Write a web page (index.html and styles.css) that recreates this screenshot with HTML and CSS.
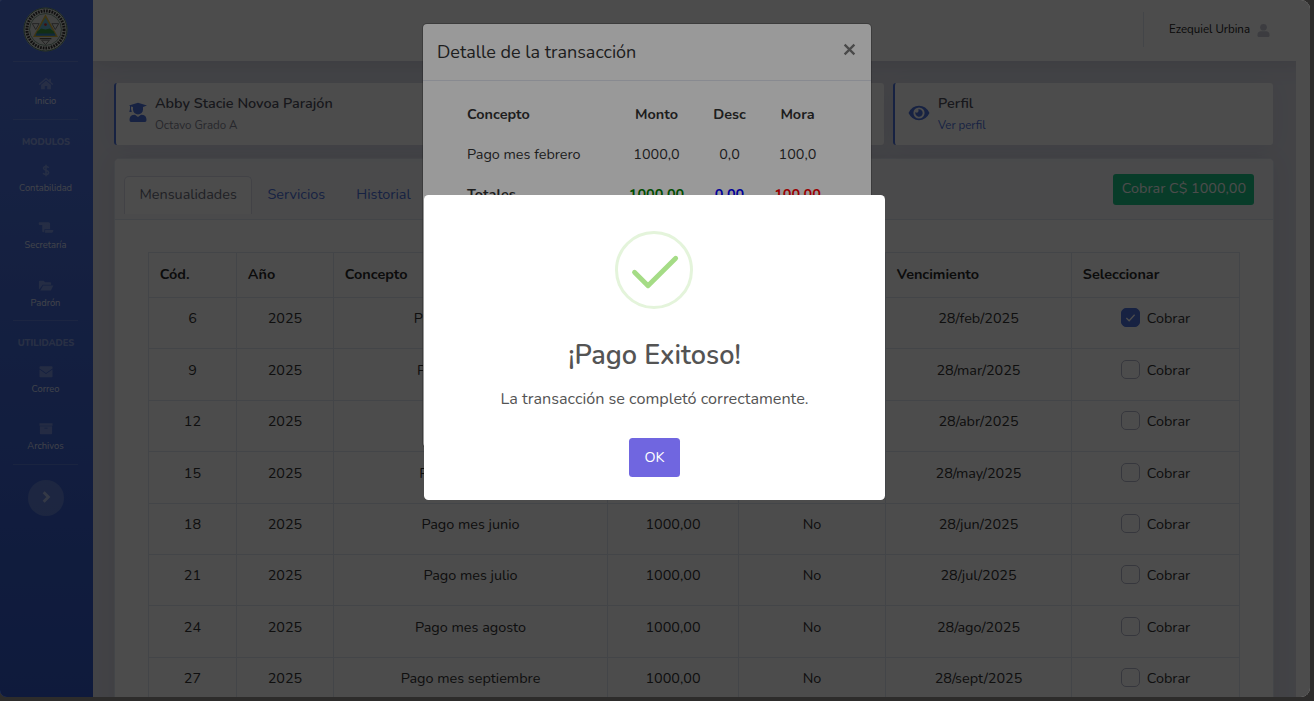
FILE: index.html
```html
<!DOCTYPE html>
<html lang="es">
<head>
<meta charset="utf-8">
<title>Detalle de la transacción</title>
<link rel="stylesheet" href="styles.css">
</head>
<body>
<div class="app">
  <nav class="sidebar">
    <svg class="brand" viewBox="0 0 46 46">
      <circle cx="23" cy="23" r="22.5" fill="#dfe1dc"/>
      <circle cx="23" cy="23" r="22" fill="none" stroke="#4d7a63" stroke-width="1"/>
      <circle cx="23" cy="23" r="19" fill="none" stroke="#333" stroke-width="3" stroke-dasharray="1.700 1.100"/>
      <circle cx="23" cy="23" r="16.300" fill="#dfe1dc" stroke="#4d7a63" stroke-width=".7"/>
      <path d="M9.500 17h7l-3.500 6zM29.500 17h7L33 23zM19 34h8l-4 4.500z" fill="none" stroke="#777" stroke-width="1"/>
      <path d="M17 32.300h12" stroke="#555" stroke-width="1.200"/>
      <path d="M23 9L34.500 30H11.500z" fill="#6bb8d6" stroke="#d8b43a" stroke-width="1.500"/>
      <path d="M14.500 25l4-3 4.500 1 4.500-1 4 3 1 2.500h-19z" fill="#3d9a45"/>
      <path d="M13.500 27h19l1 2.300H12.500z" fill="#3888c4"/>
      <circle cx="23" cy="18" r="1.400" fill="#c33"/>
    </svg>
    <hr class="rule rule-top">
    <a class="item item-home"><svg viewBox="0 0 18 16"><path d="M9 1L0 8.600l1.100 1.200L9 3.200l7.900 6.600L18 8.600 15 6V2h-2v2.400zM9 4.500L3 9.500V15h4.500v-4h3v4H15V9.500z"/></svg><span>Inicio</span></a>
    <hr class="rule">
    <h6 class="group">MODULOS</h6>
    <a class="item"><svg viewBox="0 0 18 16"><path d="M12.200 4.700C11.600 3.500 10.600 3 9 3 7.200 3 6 3.800 6 5.200 6 8.400 12.200 7 12.200 10.500 12.200 12 11 13 9 13 7.200 13 6 12.300 5.500 11M9 .8V15.200" fill="none" stroke="currentColor" stroke-width="1.900"/></svg><span>Contabilidad</span></a>
    <a class="item"><svg viewBox="0 0 18 16"><path d="M1 1.500h11q2 0 2 2V10H7v2.500a1.300 1.300 0 0 1-2.600 0V5H1.500Q0 5 0 3.300 0 1.500 1 1.500zM8 11h10q0 3.500-3 3.500H7.500Q8 13.500 8 11z"/></svg><span>Secretaría</span></a>
    <a class="item"><svg viewBox="0 0 18 16"><path d="M1.500 2H6l2 2h6q1.200 0 1.200 1.200V7H5L1.300 12 .3 12.500V3.200Q.3 2 1.500 2zM5.500 8H18l-3 6H2z"/></svg><span>Padrón</span></a>
    <hr class="rule">
    <h6 class="group">UTILIDADES</h6>
    <a class="item"><svg viewBox="0 0 18 16"><path d="M2 1.500h14q1 0 1 1v1.700L9 9.700 1 4.200V2.500q0-1 1-1zM1 5.500l8 5.500 8-5.500V14q0 1-1 1H2q-1 0-1-1z"/></svg><span>Correo</span></a>
    <a class="item item-last"><svg viewBox="0 0 18 16"><path d="M1 1.500h16v3H1zM1.500 5.200h15V14q0 1-1 1h-13q-1 0-1-1zM7 7v1h4V7z" fill-rule="evenodd"/></svg><span>Archivos</span></a>
    <hr class="rule">
    <button class="toggle"><svg viewBox="0 0 10 12"><path d="M3 2l4 4-4 4" fill="none" stroke="currentColor" stroke-width="2.400"/></svg></button>
  </nav>
  <div class="main">
    <header class="topbar">
      <div class="user"><span>Ezequiel Urbina</span><svg viewBox="0 0 14 15"><circle cx="7" cy="4" r="3.600"/><path d="M3.500 8.300h7q3 .5 3 4.200 0 2-1.500 2H2q-1.500 0-1.500-2 0-3.700 3-4.200z"/></svg></div>
    </header>
    <div class="scroll">
    <main class="content">
      <div class="infos">
        <section class="info">
          <svg viewBox="0 0 18 21"><path d="M0 3.500L9 .8l9 2.700-4 1.500v2.500a5 5 0 0 1-10 0V5L2 4.400V7l.8 3H.3L1 7V4zM3.500 13L6 12.700 9 15l3-2.300 2.500.3q3 1 3 5 0 2-1.500 2H2q-1.500 0-1.500-2 0-4 3-5z"/></svg>
          <div><h2>Abby Stacie Novoa Parajón</h2><p>Octavo Grado A</p></div>
        </section>
        <section class="info">
          <svg class="eye" viewBox="0 0 22 16"><path fill-rule="evenodd" d="M11 .8Q18 .8 21.500 8 18 15.200 11 15.200 4 15.200.5 8 4 .8 11 .8zM11 2.400a5.600 5.600 0 1 0 0 11.200 5.600 5.600 0 0 0 0-11.200zM11 4.300a3.700 3.700 0 1 1-3.600 2.800q1.600 1.200 2.700-.1 1-1.300 0-2.500z"/></svg>
          <div><h2>Perfil</h2><p class="link">Ver perfil</p></div>
        </section>
      </div>
      <section class="card">
        <div class="card-head">
          <div class="tabs"><a class="tab active">Mensualidades</a><a class="tab">Servicios</a><a class="tab">Historial</a></div>
          <button class="pay">Cobrar C$ 1000,00</button>
        </div>
        <div class="card-body">
          <table class="fees">
            <colgroup><col class="c1"><col class="c2"><col class="c3"><col class="c4"><col class="c5"><col class="c6"><col class="c7"></colgroup>
            <thead><tr><th>Cód.</th><th>Año</th><th>Concepto</th><th>Monto</th><th>Mora</th><th>Vencimiento</th><th>Seleccionar</th></tr></thead>
            <tbody>
              <tr><td>6</td><td>2025</td><td>Pago mes febrero</td><td>1000,00</td><td>Si</td><td>28/feb/2025</td><td><label class="check"><i class="box on"><svg viewBox="0 0 12 12"><path d="M1.500 6.500l3 3L10.500 3"/></svg></i>Cobrar</label></td></tr>
              <tr><td>9</td><td>2025</td><td>Pago mes marzo</td><td>1000,00</td><td>No</td><td>28/mar/2025</td><td><label class="check"><i class="box"></i>Cobrar</label></td></tr>
              <tr><td>12</td><td>2025</td><td>Pago mes abril</td><td>1000,00</td><td>No</td><td>28/abr/2025</td><td><label class="check"><i class="box"></i>Cobrar</label></td></tr>
              <tr><td>15</td><td>2025</td><td>Pago mes mayo</td><td>1000,00</td><td>No</td><td>28/may/2025</td><td><label class="check"><i class="box"></i>Cobrar</label></td></tr>
              <tr><td>18</td><td>2025</td><td>Pago mes junio</td><td>1000,00</td><td>No</td><td>28/jun/2025</td><td><label class="check"><i class="box"></i>Cobrar</label></td></tr>
              <tr><td>21</td><td>2025</td><td>Pago mes julio</td><td>1000,00</td><td>No</td><td>28/jul/2025</td><td><label class="check"><i class="box"></i>Cobrar</label></td></tr>
              <tr><td>24</td><td>2025</td><td>Pago mes agosto</td><td>1000,00</td><td>No</td><td>28/ago/2025</td><td><label class="check"><i class="box"></i>Cobrar</label></td></tr>
              <tr><td>27</td><td>2025</td><td>Pago mes septiembre</td><td>1000,00</td><td>No</td><td>28/sept/2025</td><td><label class="check"><i class="box"></i>Cobrar</label></td></tr>
            </tbody>
          </table>
        </div>
      </section>
    </main>
    </div>
  </div>
  <div class="backdrop"></div>
  <section class="modal">
    <header class="modal-head"><h5>Detalle de la transacción</h5><button class="close"><svg viewBox="0 0 12 12"><path d="M1.500 1.500l9 9M10.500 1.500l-9 9"/></svg></button></header>
    <table class="detail">
      <colgroup><col class="d1"><col class="d2"><col class="d3"><col class="d4"></colgroup>
      <tr><th>Concepto</th><th>Monto</th><th>Desc</th><th>Mora</th></tr>
      <tr><td>Pago mes febrero</td><td>1000,0</td><td>0,0</td><td>100,0</td></tr>
      <tr><th>Totales</th><th class="green">1000,00</th><th class="blue">0,00</th><th class="red">100,00</th></tr>
    </table>
  </section>
  <div class="backdrop light"></div>
  <section class="alert">
    <svg class="ok-icon" viewBox="0 0 78 78"><circle cx="39" cy="39" r="37.500" fill="none" stroke="#e4f4db" stroke-width="3"/><path d="M19.500 41.200L33 54.700 60.700 27.200" fill="none" stroke="#a5dc86" stroke-width="4.800" stroke-linecap="round" stroke-linejoin="round"/></svg>
    <h2>¡Pago Exitoso!</h2>
    <p>La transacción se completó correctamente.</p>
    <button class="ok">OK</button>
  </section>
</div>
</body>
</html>
```
FILE: styles.css
```css
* { box-sizing: border-box; }
body { margin: 0; height: 701px; overflow: hidden; background: #2d2c2b; font-family: Nunito, Lato, "Open Sans", sans-serif; font-size: 14.4px; line-height: 21.6px; color: #3a3b45; }
h2, h5, h6, p { margin: 0; font-weight: 400; }
button { font: inherit; border: 0; padding: 0; }
svg { fill: currentColor; display: block; }
.app { position: relative; width: 1310px; height: 697px; overflow: hidden; display: flex; border-radius: 2px 9px 9px 7px; background: transparent; }

.sidebar { width: 93px; flex: none; display: flex; flex-direction: column; align-items: center; padding: 7px 2px 0 0; background: linear-gradient(180deg, #4e73df 10%, #224abe 100%) 0 0 / 100% 1035px; color: rgba(255,255,255,.3); }
.brand { width: 45px; height: 45px; }
.rule { width: 65px; height: 1px; flex: none; margin: 0 1px 0 0; border: 0; background: rgba(255,255,255,.15); }
.rule-top { margin-top: 9px; }
.item { height: 57.500px; flex: none; padding-top: 15px; display: flex; flex-direction: column; align-items: center; font-size: 9.360px; line-height: 13px; }
.item-home { height: 57px; }
.item-last { height: 58px; }
.item svg { width: 16px; height: 13px; margin: 0 0 5px 1px; }
.item span { color: rgba(255,255,255,.8); }
.group { margin-top: 16px; margin-left: 1px; font-size: 9.360px; line-height: 13px; font-weight: 800; color: rgba(255,255,255,.4); }
.group + .item { margin-top: -.5px; }
.toggle { width: 36px; height: 36px; margin-top: 15px; border-radius: 50%; display: grid; place-items: center; background: rgba(255,255,255,.2); color: rgba(255,255,255,.5); }
.toggle svg { width: 12px; height: 14px; margin: -2px 0 0 1px; }
.item + .rule { margin-top: -1px; }
.item-home + .rule { margin-top: 0; }

.main { flex: 1; display: flex; flex-direction: column; background: #fff; }
.topbar { height: 61px; flex: none; display: flex; justify-content: flex-end; align-items: center; padding: 0 41px 3px 0; box-shadow: 0 2px 25px rgba(58,59,69,.12); position: relative; clip-path: inset(0 15px -40px 0); background: #fff; }
.user { height: 35px; padding: 2px 0 0 25px; border-left: 1px solid #e3e6f0; display: flex; align-items: center; gap: 7px; font-size: 11.520px; color: #222; }
.user svg { width: 13px; height: 15px; color: #c8cad8; }
.scroll { flex: 1; min-height: 0; padding-right: 15px; }
.content { height: 636px; padding: 22px 22px 0 21px; background: #e0e1ec; overflow: hidden; }
.infos { display: grid; grid-template-columns: 770px 380px; gap: 9px; }
.info { height: 62px; display: flex; padding: 10px 0 0 13px; gap: 8px; background: #fff; border-left: 2px solid #4e73df; border-radius: 3px; box-shadow: 0 2px 25px rgba(58,59,69,.04); color: #4e73df; }
.info svg { width: 18px; height: 21px; margin-top: 9px; }
.info .eye { width: 22px; height: 16px; margin-top: 12px; }
.info h2 { font-size: 14.400px; line-height: 21px; font-weight: 600; color: #50525e; }
.info p { font-size: 11.520px; line-height: 18px; margin-top: 2px; color: #858796; }
.info p.link { color: #4e73df; }
.card { height: 700px; margin-top: 13px; border: 1px solid #e3e6f0; border-radius: 5px; background: #fff; box-shadow: 0 2px 25px rgba(58,59,69,.08); }
.card-head { height: 61px; padding: 0 18px 0 9px; display: flex; justify-content: space-between; align-items: flex-start; background: #f8f9fc; border-bottom: 1px solid #e3e6f0; border-radius: 4px 4px 0 0; }
.tabs { display: flex; padding-top: 17px; }
.tab { height: 38px; line-height: 36px; padding: 0 15.500px; color: #4e73df; }
.tab.active { width: 128px; padding: 0 0 0 14.500px; line-height: 35px; border: 1px solid #dddfeb; border-bottom: 0; border-radius: 5px 5px 0 0; background: #fff; color: #6e707e; }
.pay { width: 141px; height: 31px; margin: 15px 1px 0 0; padding: 0 0 2px 1px; border-radius: 3px; background: #1cc88a; color: #fff; }
.card-body { padding: 32px 33px; }
table { border-collapse: collapse; table-layout: fixed; }
.fees { width: 1092px; color: #333; }
.fees th, .fees td { border: 1px solid #e3e6f0; padding: 10.800px; vertical-align: top; }
.fees th { height: 45px; text-align: left; color: #2a2a2a; }
.fees td { height: 51.400px; text-align: center; padding: 10.500px 10.800px 0; }
.fees tbody tr:first-child td { padding-top: 10px; }
.c1 { width: 88px; } .c2 { width: 97px; } .c3 { width: 274px; } .c4 { width: 131px; } .c5 { width: 147px; } .c6 { width: 186px; } .c7 { width: 168px; }
.check { display: flex; justify-content: center; gap: 7px; }
.box { width: 19px; height: 19px; border: 1px solid #b7b9cc; border-radius: 5px; }
.box.on { border-color: #4e73df; background: #4e73df; display: grid; place-items: center; }
.box svg { width: 11px; height: 11px; fill: none; stroke: #fff; stroke-width: 1.400; }

.backdrop { position: absolute; inset: 0; background: rgba(0,0,0,.5); }
.backdrop.light { background: rgba(0,0,0,.4); }
.modal { position: absolute; left: 422px; top: 23px; width: 450px; height: 425px; background: #fff; background-clip: padding-box; border: 1px solid rgba(0,0,0,.2); border-radius: 5px; color: #333; }
.modal-head { height: 57px; padding: 1px 14px 0; display: flex; align-items: center; justify-content: space-between; border-bottom: 1px solid #e3e6f0; }
.modal-head h5 { font-size: 18px; }
.close { width: 14px; margin-bottom: 6px; background: none; color: #7a7a7a; }
.close svg { width: 13px; height: 13px; stroke: currentColor; stroke-width: 2.100; }
.detail { width: 372px; margin: 14px 0 0 33px; }
.detail th, .detail td { height: 40px; padding: 0 1px 0 0; text-align: center; }
.detail tr > :first-child { text-align: left; padding-left: 11px; }
.d1 { width: 160px; } .d2 { width: 82px; } .d3 { width: 64px; } .d4 { width: 72px; }
.detail .green { color: green; } .detail .blue { color: blue; } .detail .red { color: red; }

.alert { position: absolute; left: 424px; top: 195px; width: 461px; height: 305px; padding-top: 36px; display: flex; flex-direction: column; align-items: center; background: #fff; border-radius: 4.500px; color: #545454; }
.ok-icon { width: 78px; height: 78px; margin-right: 2px; }
.alert h2 { margin-top: 27px; font-size: 27px; line-height: 40px; font-weight: 600; }
.alert p { margin-top: 11px; font-size: 16.200px; line-height: 24px; }
.ok { width: 51px; height: 39px; margin-top: 27px; border-radius: 3.500px; background: #7066e0; color: #fff; }
```
